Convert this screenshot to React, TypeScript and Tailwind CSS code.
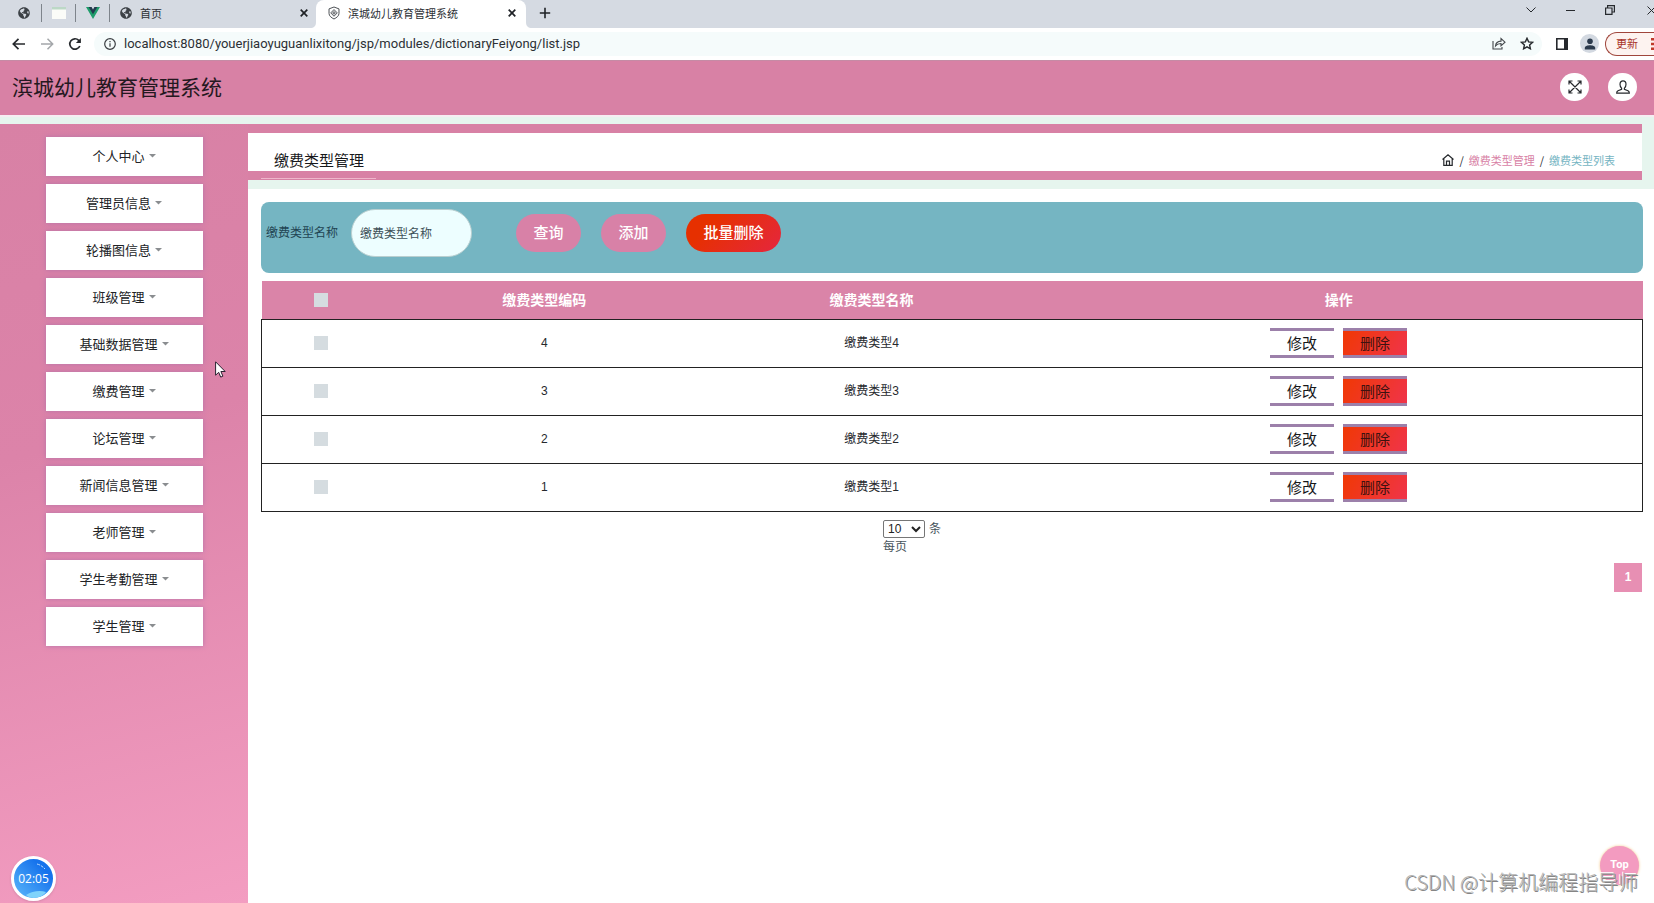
import { FaGlobeAmericas } from 'react-icons/fa';

const MENU = [
  '个人中心',
  '管理员信息',
  '轮播图信息',
  '班级管理',
  '基础数据管理',
  '缴费管理',
  '论坛管理',
  '新闻信息管理',
  '老师管理',
  '学生考勤管理',
  '学生管理',
];

const ROWS = [4, 3, 2, 1];

function CloseIcon() {
  return (
    <svg viewBox="0 0 8 8" className="w-2 h-2" fill="none" stroke="#1f2226" strokeWidth="1.7">
      <path d="M.7.7l6.6 6.6M7.3.7L.7 7.3" />
    </svg>
  );
}

function ShieldIcon() {
  return (
    <svg viewBox="0 0 14 16" className="w-3 h-3.5 shrink-0" fill="none" stroke="#43474b" strokeWidth="1.1">
      <path d="M7 1l5.800 2.200v5.300c0 3-2.800 5-5.800 6.500-3-1.500-5.800-3.500-5.800-6.500V3.200z" />
      <path d="M7 4l3.800 3.900L7 11.800 3.200 7.900z" />
      <circle cx="7" cy="7.900" r="1.300" />
    </svg>
  );
}

function TabStrip() {
  return (
    <div className="flex h-7 items-center bg-[#d5dae2] pb-0.5 text-[11px] text-[#2c3035]">
      <button aria-label="localhost" className="flex w-[41px] items-center justify-end pr-[11px]">
        <FaGlobeAmericas className="h-3 w-3 text-[#3c4146]" />
      </button>
      <span className="h-[18px] w-px bg-[#7e848b]" />
      <button aria-label="page" className="flex w-[33px] justify-center">
        <svg viewBox="0 0 14 12" className="h-3 w-3.5">
          <path d="M0 0h14v12H0z" fill="#fbfcf8" />
          <path d="M0 0h14v2.500H0z" fill="#bcd8c6" />
        </svg>
      </button>
      <span className="h-[18px] w-px bg-[#7e848b]" />
      <button aria-label="Vue" className="flex w-[33px] justify-center">
        <svg viewBox="0 0 14 12" className="h-3 w-3.5">
          <path d="M0 0h3.500L7 6 10.500 0H14L7 12z" fill="#1f9d6b" />
          <path d="M2.600 0h3L7 2.400 8.400 0h3L7 7.300z" fill="#22394d" />
        </svg>
      </button>
      <span className="h-[18px] w-px bg-[#7e848b]" />
      <div className="flex w-[206px] items-center gap-2 pr-2 pl-2.5">
        <FaGlobeAmericas className="h-3 w-3 text-[#3c4146]" />
        <span className="flex-1">首页</span>
        <button aria-label="关闭标签页"><CloseIcon /></button>
      </div>
      <div className="relative -mb-0.5 flex h-7 w-[210px] items-center gap-2 rounded-t-lg bg-white pr-2.5 pb-0.5 pl-3">
        <svg viewBox="0 0 6 6" className="absolute bottom-0 -left-1.5 h-1.5 w-1.5"><path d="M6 0v6H0c4 0 6-2 6-6z" fill="#fff" /></svg>
        <svg viewBox="0 0 6 6" className="absolute -right-1.5 bottom-0 h-1.5 w-1.5"><path d="M0 0v6h6C2 6 0 4 0 0z" fill="#fff" /></svg>
        <ShieldIcon />
        <span className="flex-1 whitespace-nowrap">滨城幼儿教育管理系统</span>
        <button aria-label="关闭标签页"><CloseIcon /></button>
      </div>
      <button aria-label="新标签页" className="ml-[13px]">
        <svg viewBox="0 0 12 12" className="h-3 w-3" fill="none" stroke="#1f2226" strokeWidth="1.600">
          <path d="M6 .8v10.400M.8 6h10.400" />
        </svg>
      </button>
      <div className="ml-auto flex items-center gap-8 overflow-hidden pb-1.5">
        <svg viewBox="0 0 10 6" className="-mr-0.5 h-1.5 w-2.5" fill="none" stroke="#26292d"><path d="M.5.5L5 5 9.500.5" /></svg>
        <svg viewBox="0 0 9 1" className="h-px w-[9px]"><path d="M0 0h9v1H0z" fill="#26292d" /></svg>
        <svg viewBox="0 0 10 10" className="-ml-0.5 h-2.5 w-2.5" fill="none" stroke="#26292d" strokeWidth="1.200">
          <path d="M.6 3h6.400v6.400H.6zM2.600 3V.6h6.800V7H7" />
        </svg>
        <svg viewBox="0 0 9 9" className="-mr-0.5 h-[9px] w-[9px]" fill="none" stroke="#26292d"><path d="M.5.5l8 8M8.500.5l-8 8" /></svg>
      </div>
    </div>
  );
}

function AddressBar() {
  return (
    <div className="flex h-8 items-center bg-white pb-px">
      <button aria-label="后退" className="ml-3">
        <svg viewBox="0 0 14 12" className="h-3 w-3.5" fill="none" stroke="#26292d" strokeWidth="1.700"><path d="M13 6H1.500M6.500.8L1.300 6l5.200 5.200" /></svg>
      </button>
      <button aria-label="前进" className="ml-3.5">
        <svg viewBox="0 0 14 12" className="h-3 w-3.5" fill="none" stroke="#a4a7aa" strokeWidth="1.500"><path d="M1 6h11.500M7.500.8L12.700 6l-5.200 5.200" /></svg>
      </button>
      <button aria-label="刷新" className="ml-3.5">
        <svg viewBox="0 0 14 14" className="h-3.5 w-3.5" fill="none" stroke="#26292d" strokeWidth="1.700">
          <path d="M11.800 9A5.200 5.200 0 1 1 10.700 3.300L12 4.600" />
          <path d="M12.900.9v5H7.900z" fill="#26292d" stroke="none" />
        </svg>
      </button>
      <div className="ml-3 flex h-6 flex-1 items-center rounded-full bg-[#f5fbfb] pl-2.5">
        <svg viewBox="0 0 12 12" className="h-3 w-3" fill="none" stroke="#3a3e42" strokeWidth="1.200">
          <circle cx="6" cy="6" r="5.300" />
          <path d="M6 5.200v3.600M6 2.900v1.300" />
        </svg>
        <input
          aria-label="地址"
          readOnly
          value="localhost:8080/youerjiaoyuguanlixitong/jsp/modules/dictionaryFeiyong/list.jsp"
          className="ml-2 min-w-0 flex-1 bg-transparent font-['Roboto',sans-serif] text-[13px] text-[#2c3035] outline-none"
        />
        <button aria-label="分享">
          <svg viewBox="0 0 14 13" className="h-[13px] w-3.5" fill="none" stroke="#43474b" strokeWidth="1.100">
            <path d="M1 4v8h9v-2M3.500 9c.3-3.200 2.400-4.800 5.500-4.900V1.600L13 5.200 9 8.800V6.500C6.500 6.500 4.900 7.200 3.500 9z" />
          </svg>
        </button>
        <button aria-label="收藏" className="mr-2 ml-3.5">
          <svg viewBox="0 0 14 13" className="h-[13px] w-3.5" fill="none" stroke="#26292d" strokeWidth="1.400">
            <path d="M7 1.300l1.600 3.600 3.900.4-2.900 2.600.8 3.900L7 9.800l-3.400 2 .8-3.900L1.500 5.300l3.900-.4z" />
          </svg>
        </button>
      </div>
      <button aria-label="侧边栏" className="ml-3.5">
        <svg viewBox="0 0 12 12" className="h-3 w-3"><path d="M.8.8h10.400v10.400H.8z" fill="#fff" stroke="#26292d" strokeWidth="1.600" /><path d="M8 0h4v12H8z" fill="#26292d" /></svg>
      </button>
      <button aria-label="用户" className="ml-3 flex h-[19px] w-[19px] items-center justify-center rounded-full bg-[#d3d9e1]">
        <svg viewBox="0 0 12 12" className="h-3 w-3" fill="#2b3a4c"><circle cx="6" cy="3.200" r="2.800" /><path d="M.8 11.500V9.800C.8 8 3.500 7.200 6 7.200s5.200.8 5.200 2.600v1.700z" /></svg>
      </button>
      <button className="ml-1.5 flex h-6 w-[49px] items-center justify-between rounded-l-full border border-r-0 border-[#a0463c] bg-[#fdf3f0] pl-2.5 text-[11px] text-[#a8342a]">
        更新
        <svg viewBox="0 0 3 12" className="h-3 w-[3px]" fill="#c0392b"><path d="M0 0h3v2.500H0zM0 4.700h3v2.500H0zM0 9.500h3V12H0z" /></svg>
      </button>
    </div>
  );
}

function Header() {
  return (
    <header className="flex h-[55px] items-center border-t border-[#c58ba5] bg-[#d881a5] pr-[17px] pb-0.5 pl-3">
      <h1 className="flex-1 text-[21px] text-[#241820]">滨城幼儿教育管理系统</h1>
      <button aria-label="全屏" className="flex h-7 w-[29px] items-center justify-center rounded-full bg-white">
        <svg viewBox="0 0 14 14" className="h-3.5 w-3.5" fill="none" stroke="#26292d" strokeWidth="1.200">
          <path d="M1 4.500V1h3.500M9.500 1H13v3.500M13 9.500V13H9.500M4.500 13H1V9.500M1 1l12 12M13 1L1 13" />
        </svg>
      </button>
      <button aria-label="账户" className="ml-[19px] flex h-7 w-[29px] items-center justify-center rounded-full bg-white">
        <svg viewBox="0 0 14 14" className="h-3.5 w-3.5" fill="none" stroke="#26292d" strokeWidth="1.200">
          <path d="M5.600 8.200C4.500 7.300 4 5.900 4 4.200 4 2.200 5.300.8 7 .8s3 1.400 3 3.400c0 1.700-.5 3.100-1.600 4v1.200l3.600 1.400c.9.400 1.300 1.200 1.300 2.300H.7c0-1.100.4-1.900 1.300-2.300l3.600-1.400z" />
        </svg>
      </button>
    </header>
  );
}

function Sidebar() {
  return (
    <nav className="flex w-[15%] flex-col items-center gap-2 bg-linear-[165deg,#d881a5_0%,#dc83a9_40%,#f39dc1_100%] pt-[13px]">
      {MENU.map(item => (
        <button
          key={item}
          className="flex h-[39px] w-[157px] items-center justify-center gap-1 bg-white pb-0.5 text-[13px] text-[#212326] shadow-[0_0_5px_#b573a8]"
        >
          {item}
          <svg viewBox="0 0 7 4" className="h-1 w-[7px]"><path d="M0 0h7L3.500 3.600z" fill="#8a8d90" /></svg>
        </button>
      ))}
    </nav>
  );
}

function TitleBar() {
  return (
    <div className="bg-[#e6f5ee] pb-[9px]">
      <div className="relative mr-3 flex h-14 items-end justify-between border-y-[9px] border-[#d881a5] bg-white pr-[27px] pb-px pl-[26px]">
        <h2 className="text-[15px] leading-5 text-[#17181a]">缴费类型管理</h2>
        <div className="flex items-center gap-[5px] text-[11px] leading-5 text-[#26292d]">
          <svg viewBox="0 0 12 12" className="h-3 w-3" fill="none" stroke="#26292d" strokeWidth="1.200">
            <path d="M.5 5.500L6 .9l5.500 4.600M1.800 4.600v6.800h8.400V4.600M4.500 11.400V7.200h3v4.200" />
          </svg>
          <span>/</span>
          <a href="#manage" className="text-[#d881a5]">缴费类型管理</a>
          <span>/</span>
          <a href="#list" className="text-[#74b4c2]">缴费类型列表</a>
        </div>
        <span className="absolute -bottom-2 left-[13px] h-px w-[115px] bg-[#eeb6cb]" />
      </div>
    </div>
  );
}

function SearchPanel() {
  return (
    <form className="flex h-[71px] items-start rounded-lg bg-[#75b5c2] pt-[7px] pl-[5px]">
      <label htmlFor="name" className="text-[12px] leading-[46px] text-[#1f4452]">缴费类型名称</label>
      <input
        id="name"
        placeholder="缴费类型名称"
        className="ml-[13px] h-12 w-[121px] rounded-full border border-[#b9cfd0] bg-[#edfeff] px-2 pb-0.5 text-[12px] placeholder:text-[#3d5158]"
      />
      <button type="button" className="mt-[5px] ml-11 h-[38px] w-[65px] rounded-full bg-[#d881a7] pb-0.5 text-[15px] font-medium text-white">查询</button>
      <button type="button" className="mt-[5px] ml-5 h-[38px] w-[65px] rounded-full bg-[#d881a7] pb-0.5 text-[15px] font-medium text-white">添加</button>
      <button type="button" className="mt-[5px] ml-5 h-[38px] w-[95px] rounded-full bg-linear-[135deg,#e63000_25%,#e5263f] pb-0.5 text-[15px] font-medium text-white">批量删除</button>
    </form>
  );
}

function FeeTable() {
  return (
    <table className="mt-2 w-full table-fixed border-collapse text-center text-[12px] text-[#26292d]">
      <colgroup>
        <col className="w-[119px]" />
        <col className="w-[23.7%]" />
        <col className="w-[23.7%]" />
        <col />
      </colgroup>
      <thead>
        <tr className="h-[38px] bg-[#da84a8] text-[14px] leading-5 text-white">
          <th><input type="checkbox" aria-label="全选" className="block mx-auto h-3.5 w-3.5 appearance-none bg-[#d5dce0]" /></th>
          <th className="pb-0.5">缴费类型编码</th>
          <th className="pb-0.5">缴费类型名称</th>
          <th className="pb-0.5">操作</th>
        </tr>
      </thead>
      <tbody className="border border-[#222]">
        {ROWS.map(n => (
          <tr key={n} className="h-12 border-b border-[#222]">
            <td><input type="checkbox" aria-label={`选择缴费类型${n}`} className="block mx-auto h-3.5 w-3.5 appearance-none bg-[#d5dce0]" /></td>
            <td className="font-['Liberation_Sans','Noto_Sans_CJK_SC',sans-serif]">{n}</td>
            <td className="font-['Liberation_Sans','Noto_Sans_CJK_SC',sans-serif]">缴费类型{n}</td>
            <td>
              <div className="flex justify-center gap-[9px] text-[15px] leading-6">
                <button className="w-16 border-y-[3px] border-[#9c80aa] bg-white text-[#17181a]">修改</button>
                <button className="w-16 border-y-[3px] border-[#9c80aa] bg-linear-[120deg,#f03804,#f0344a] text-[#3d1210]">删除</button>
              </div>
            </td>
          </tr>
        ))}
      </tbody>
    </table>
  );
}

function RecordingBadge() {
  return (
    <div className="absolute bottom-0.5 left-[11px] flex h-[45px] w-[45px] items-center justify-center overflow-hidden rounded-full border-[3px] border-white bg-linear-[45deg,#5cb8fb,#1673ec_75%] shadow">
      <svg viewBox="0 0 39 39" className="absolute inset-0 h-full w-full" fill="none">
        <path d="M12 36c6-4 14-5 20-3-3 4-8 6-12 6s-6-1-8-3z" fill="#7fd3fb" />
        <path d="M23 5c4 1 6 3 8 5" stroke="#b9dcff" strokeDasharray="3 1" />
      </svg>
      <span className="relative font-['Open_Sans',sans-serif] text-[12px] leading-4 text-white">02:05</span>
    </div>
  );
}

export default function App() {
  return (
    <div className="relative flex min-h-screen flex-col overflow-hidden bg-white font-['Noto_Sans_CJK_SC',sans-serif]">
      <TabStrip />
      <AddressBar />
      <Header />
      <div className="h-[9px] border-t-2 border-[#f6eef2] bg-[#e6f5ee]" />
      <div className="flex flex-1">
        <Sidebar />
        <main className="flex-1">
          <TitleBar />
          <div className="pt-[13px] pr-[11px] pl-[13px]">
            <SearchPanel />
            <FeeTable />
            <div className="mx-auto mt-[7px] w-[138px] text-[12px] leading-[17px] text-[#47545c]">
              <select aria-label="每页条数" className="mr-1 h-[18px] w-[42px] rounded-xs border border-[#767676] bg-white font-['Liberation_Sans',sans-serif] text-[12px] text-[#222]">
                <option>10</option>
              </select>
              条
              <div className="leading-4">每页</div>
            </div>
            <div className="mt-[9px] flex justify-end pr-px">
              <button className="h-[29px] w-7 bg-[#e78fb3] font-['Liberation_Sans',sans-serif] text-[12px] font-bold text-white">1</button>
            </div>
          </div>
        </main>
      </div>
      <RecordingBadge />
      <button className="absolute right-[15px] bottom-[18px] h-[39px] w-[39px] rounded-full bg-[#f39bc0] font-['Roboto',sans-serif] text-[11px] font-bold text-white shadow-[0_0_3px_#f3c98a]">Top</button>
      <div className="pointer-events-none absolute right-4 bottom-[7px] text-[20px] leading-7 font-light whitespace-nowrap text-[#b4b4b4] [text-shadow:1px_1px_0_#858585,-1px_-1px_0_#fff]">
        CSDN @计算机编程指导师
      </div>
      <svg viewBox="0 0 11 17" className="pointer-events-none absolute top-[361px] left-[215px] h-[17px] w-[11px]">
        <path d="M.6.8v13.400l3.100-2.900 2 4.800 2.200-.9-2-4.700h4.300z" fill="#fff" stroke="#2a2030" />
      </svg>
    </div>
  );
}
